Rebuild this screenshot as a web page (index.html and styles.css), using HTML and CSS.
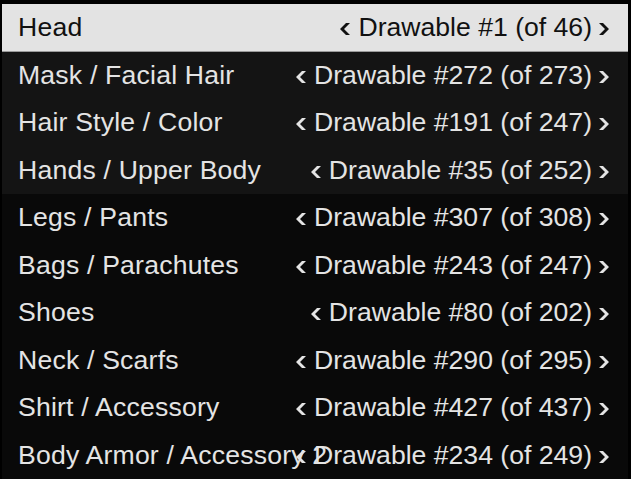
FILE: index.html
```html
<!DOCTYPE html>
<html>
<head>
<meta charset="utf-8">
<link rel="stylesheet" href="styles.css">
</head>
<body>
<div class="menu">
  <div class="row active"><span class="label">Head</span><span class="value"><svg class="chev prev" viewBox="0 0 10 12"><polygon points="6,0 10,0 4,6 10,12 6,12 0,6"/></svg><span>Drawable #1 (of 46)</span><svg class="chev next" viewBox="0 0 10 12"><polygon points="0,0 4,0 10,6 4,12 0,12 6,6"/></svg></span></div>
  <div class="row lit"><span class="label">Mask / Facial Hair</span><span class="value"><svg class="chev prev" viewBox="0 0 10 12"><polygon points="6,0 10,0 4,6 10,12 6,12 0,6"/></svg><span>Drawable #272 (of 273)</span><svg class="chev next" viewBox="0 0 10 12"><polygon points="0,0 4,0 10,6 4,12 0,12 6,6"/></svg></span></div>
  <div class="row lit"><span class="label">Hair Style / Color</span><span class="value"><svg class="chev prev" viewBox="0 0 10 12"><polygon points="6,0 10,0 4,6 10,12 6,12 0,6"/></svg><span>Drawable #191 (of 247)</span><svg class="chev next" viewBox="0 0 10 12"><polygon points="0,0 4,0 10,6 4,12 0,12 6,6"/></svg></span></div>
  <div class="row lit"><span class="label">Hands / Upper Body</span><span class="value"><svg class="chev prev" viewBox="0 0 10 12"><polygon points="6,0 10,0 4,6 10,12 6,12 0,6"/></svg><span>Drawable #35 (of 252)</span><svg class="chev next" viewBox="0 0 10 12"><polygon points="0,0 4,0 10,6 4,12 0,12 6,6"/></svg></span></div>
  <div class="row"><span class="label">Legs / Pants</span><span class="value"><svg class="chev prev" viewBox="0 0 10 12"><polygon points="6,0 10,0 4,6 10,12 6,12 0,6"/></svg><span>Drawable #307 (of 308)</span><svg class="chev next" viewBox="0 0 10 12"><polygon points="0,0 4,0 10,6 4,12 0,12 6,6"/></svg></span></div>
  <div class="row"><span class="label">Bags / Parachutes</span><span class="value"><svg class="chev prev" viewBox="0 0 10 12"><polygon points="6,0 10,0 4,6 10,12 6,12 0,6"/></svg><span>Drawable #243 (of 247)</span><svg class="chev next" viewBox="0 0 10 12"><polygon points="0,0 4,0 10,6 4,12 0,12 6,6"/></svg></span></div>
  <div class="row"><span class="label">Shoes</span><span class="value"><svg class="chev prev" viewBox="0 0 10 12"><polygon points="6,0 10,0 4,6 10,12 6,12 0,6"/></svg><span>Drawable #80 (of 202)</span><svg class="chev next" viewBox="0 0 10 12"><polygon points="0,0 4,0 10,6 4,12 0,12 6,6"/></svg></span></div>
  <div class="row"><span class="label">Neck / Scarfs</span><span class="value"><svg class="chev prev" viewBox="0 0 10 12"><polygon points="6,0 10,0 4,6 10,12 6,12 0,6"/></svg><span>Drawable #290 (of 295)</span><svg class="chev next" viewBox="0 0 10 12"><polygon points="0,0 4,0 10,6 4,12 0,12 6,6"/></svg></span></div>
  <div class="row"><span class="label">Shirt / Accessory</span><span class="value"><svg class="chev prev" viewBox="0 0 10 12"><polygon points="6,0 10,0 4,6 10,12 6,12 0,6"/></svg><span>Drawable #427 (of 437)</span><svg class="chev next" viewBox="0 0 10 12"><polygon points="0,0 4,0 10,6 4,12 0,12 6,6"/></svg></span></div>
  <div class="row"><span class="label">Body Armor / Accessory 2</span><span class="value"><svg class="chev prev" viewBox="0 0 10 12"><polygon points="6,0 10,0 4,6 10,12 6,12 0,6"/></svg><span>Drawable #234 (of 249)</span><svg class="chev next" viewBox="0 0 10 12"><polygon points="0,0 4,0 10,6 4,12 0,12 6,6"/></svg></span></div>
</div>
</body>
</html>
```
FILE: styles.css
```css
html, body {
  margin: 0;
  padding: 0;
  background: #000;
  overflow: hidden;
}
.menu {
  margin: 4px 3px 0 2px;
  font-family: "Liberation Sans", Arial, sans-serif;
  font-size: 26.6px;
  color: #e4e4e4;
}
.row {
  display: grid;
  grid-template-columns: 1fr;
  align-items: center;
  height: 47.5px;
  box-sizing: border-box;
  padding: 0 19px 0 16px;
  background: #090909;
}
.row > * {
  grid-row: 1;
  grid-column: 1;
  white-space: nowrap;
}
.row.lit {
  background: #141414;
}
.row.active {
  background: #e3e3e3;
  color: #111;
  border-bottom: 1px solid #9a9a9a;
}
.label {
  justify-self: start;
  letter-spacing: 0.2px;
}
.value {
  justify-self: end;
  display: flex;
  align-items: center;
}
.chev {
  flex: none;
  width: 10px;
  height: 12px;
  margin-top: 3px;
  fill: currentColor;
}
.chev.prev {
  margin-right: 8px;
}
.chev.next {
  margin-left: 7px;
}
```
